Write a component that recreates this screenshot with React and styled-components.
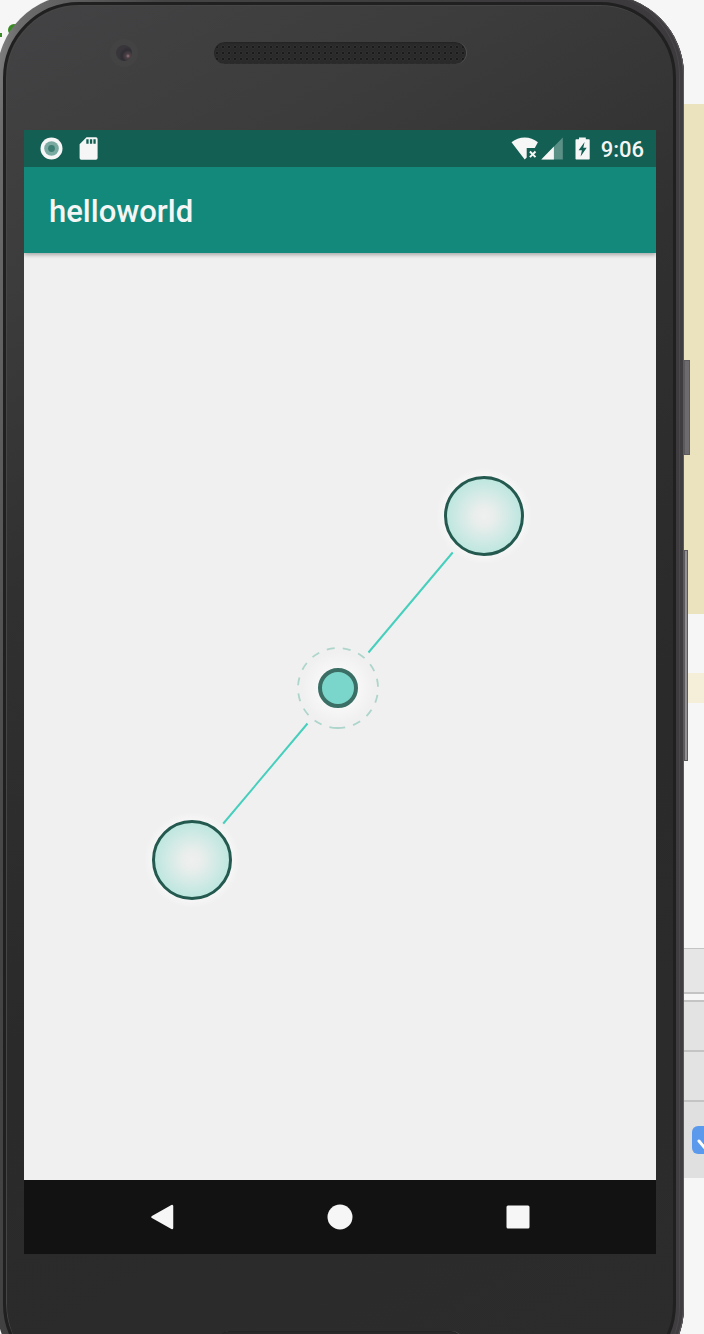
import React from "react";
import styled, { createGlobalStyle } from "styled-components";

const GlobalStyle = createGlobalStyle`
  *, *::before, *::after { box-sizing: border-box; }
  body { margin: 0; background: #f6f6f6; font-family: Roboto, "Liberation Sans", sans-serif; }
`;

const Page = styled.div`
  position: relative;
  display: flex;
  align-items: flex-start;
  min-height: 100vh;
  overflow: hidden;
  background: #f6f6f6;
`;

const BackdropMark = styled.svg`
  position: absolute;
  left: 0;
  top: 20px;
`;

const Phone = styled.main`
  position: relative;
  flex: 1;
  min-width: 0;
  margin: -5px 0 -53px -3px;
  padding: 7px 8px 7px 6px;
  border-radius: 80px;
  background: linear-gradient(100deg, #8b8b8b 0, #6c6c6c 3%, #444 18%, #3b393b 60%, #403e40 100%);
  box-shadow: inset -1px 0 0 #5c5a5c, inset -4px 0 0 #3f3d3f, inset -5px 0 0 #4a484a;
`;

const Body = styled.div`
  padding: 0 17px 0 18px;
  border: 3px solid #212021;
  border-radius: 76px;
  background: linear-gradient(150deg, #434345 0, #3c3c3c 16%, #303030 34%, #2a2a2a 60%, #2c2c2c 100%);
  box-shadow: inset 1px 1px 0 #464646;
`;

const SideButton = styled.span`
  position: absolute;
  left: 100%;
  top: ${(p) => p.$top}px;
  width: ${(p) => p.$width}px;
  height: ${(p) => p.$height}px;
  border: 1px solid #5c5a5c;
  background: ${(p) => p.$color};
`;

const TopBezel = styled.div`
  display: grid;
  grid-template-columns: 1fr auto 1fr;
  align-items: center;
  height: 125px;
  padding-bottom: 29px;
`;

const Camera = styled.span`
  display: flex;
  align-items: center;
  justify-content: center;
  justify-self: end;
  width: 28px;
  height: 28px;
  margin-right: 76px;
  border-radius: 50%;
  background: #444344;

  &::before {
    content: "";
    width: 16px;
    height: 16px;
    border-radius: 50%;
    background: radial-gradient(circle at 12px 11px, #a3777b 0, #4d4348 2px, #2f2d33 6px, #38363b 9px);
  }
`;

const Speaker = styled.span`
  width: ${(p) => p.$width}px;
  height: 22px;
  border-radius: 11px;
  background:
    radial-gradient(circle at 3px 3px, #171717 0, #1c1c1c 1px, #3c3c3c 2px, transparent 2px) 0 2px / 6px 6px,
    #2a2a2a;
  box-shadow: inset 0 1px 1px #242424, 1px 0 0 #505050;
`;

const BottomBezel = styled.div`
  display: flex;
  justify-content: center;
  align-items: flex-start;
  height: 123px;
  padding-top: 77px;
`;

const Screen = styled.section`
  display: flex;
  flex-direction: column;
  background: #f0f0f0;
`;

const StatusBar = styled.header`
  display: flex;
  align-items: center;
  justify-content: space-between;
  height: 37px;
  padding: 0 12px 0 16px;
  background: #135f53;
  color: #f5f5f5;
`;

const StatusGroup = styled.div`
  display: flex;
  align-items: center;
  gap: ${(p) => p.$gap}px;
  svg { display: block; }
`;

const Time = styled.time`
  padding-top: 2px;
  font-size: 22px;
  line-height: 26px;
  font-weight: 500;
`;

const AppBar = styled.div`
  position: relative;
  display: flex;
  align-items: center;
  height: 86px;
  padding: 4px 25px 0;
  background: #13897b;
  box-shadow: 0 2px 4px rgba(0, 0, 0, 0.3);
  clip-path: inset(0 0 -8px 0);
`;

const Title = styled.h1`
  margin: 0;
  color: #f5f5f5;
  font-size: 31px;
  line-height: 36px;
  font-weight: 500;
`;

const Canvas = styled.svg`
  display: block;
  width: 100%;
  height: auto;
`;

const NavBar = styled.nav`
  display: flex;
  justify-content: center;
  height: 74px;
  background: #121212;
`;

const NavButton = styled.button`
  display: flex;
  flex: 0 1 178px;
  align-items: center;
  justify-content: center;
  padding: 0;
  border: 0;
  background: none;
  color: #f6f6f6;
`;

const Desktop = styled.aside`
  flex: none;
  width: 20px;
`;

const Block = styled.div`
  height: ${(p) => p.$height}px;
  background: ${(p) => p.$color || "transparent"};
  border-top: ${(p) => p.$line || 0}px solid #c4c4c4;
`;

const OptionRow = styled(Block)`
  padding: 24px 0 0 8px;
  overflow: hidden;
`;

const CheckLabel = styled.label`
  display: grid;
  width: 28px;
  height: 28px;
  > * { grid-area: 1 / 1; }
`;

const CheckInput = styled.input`
  appearance: none;
  width: 28px;
  height: 28px;
  margin: 0;
  border-radius: 6px;
  background: #5b99ec;
`;

const RecordIcon = () => (
  <svg width="23" height="23" viewBox="0 0 23 23" aria-hidden="true">
    <circle cx="11.5" cy="11.5" r="11" fill="#f6f6f6" />
    <circle cx="11.5" cy="11.5" r="7.3" fill="#78aaa2" />
    <circle cx="11.5" cy="11.5" r="3.4" fill="#3d7e73" />
  </svg>
);

const SdCardIcon = () => (
  <svg width="19" height="23" viewBox="0 0 19 23" aria-hidden="true">
    <path d="M7.5 .3H17a1.6 1.6 0 0 1 1.6 1.6V21a1.7 1.7 0 0 1-1.7 1.7H2.3A1.7 1.7 0 0 1 .6 21V7.2Z" fill="#f6f6f6" />
    <path d="M7.3 2.3h2.3v4.5H7.3zM10.9 2.3h2.3v4.5h-2.3zM14.4 2.3h2.3v4.5h-2.3z" fill="#135f53" />
  </svg>
);

const WifiIcon = () => (
  <svg width="30" height="23" viewBox="0 0 30 23" aria-hidden="true">
    <path d="M.5 5.2Q6.3.4 13.7.4T26.9 5.2L23.8 11H15.7v9.4l-2 2.2Z" fill="#f6f6f6" />
    <path d="m18.9 14.5 5.6 5.6m0-5.6-5.6 5.6" stroke="#f6f6f6" strokeWidth="2" />
  </svg>
);

const SignalIcon = () => (
  <svg width="23" height="23" viewBox="0 0 23 23" aria-hidden="true">
    <path d="M.3 22.4 21.8.4v22Z" fill="#5b9087" />
    <path d="M.3 22.4 12.9 9.5v12.9Z" fill="#f6f6f6" />
  </svg>
);

const BatteryIcon = () => (
  <svg width="15" height="23" viewBox="0 0 15 23" aria-hidden="true">
    <path d="M4 .4h6.8v1.9H14a.7.7 0 0 1 .7.7v18.8a.7.7 0 0 1-.7.7H1.2a.7.7 0 0 1-.7-.7V3a.7.7 0 0 1 .7-.7H4Z" fill="#f6f6f6" />
    <path d="M9.6 5 3.6 13.300h3.300L5.600 19.600l6.100-8.800H8.300Z" fill="#135f53" />
  </svg>
);

const Handle = ({ x, y }) => (
  <g>
    <circle cx={x} cy={y} r="48" fill="url(#halo)" />
    <circle cx={x} cy={y} r="38.5" fill="url(#bubble)" stroke="#24594f" strokeWidth="3" />
  </g>
);

const NodeCanvas = () => (
  <Canvas viewBox="0 0 632 927" role="img" aria-label="Two connected handles">
    <defs>
      <radialGradient id="bubble">
        <stop offset="0" stopColor="#efefef" />
        <stop offset=".25" stopColor="#e9eeec" />
        <stop offset="1" stopColor="#bce6df" />
      </radialGradient>
      <radialGradient id="halo">
        <stop offset=".8" stopColor="#f7f7f7" />
        <stop offset="1" stopColor="#f0f0f0" />
      </radialGradient>
      <radialGradient id="dotHalo">
        <stop offset=".5" stopColor="#f8f8f8" />
        <stop offset="1" stopColor="#f0f0f0" />
      </radialGradient>
    </defs>
    <path d="M429.5 298.500 344.500 399.500M283.500 470.500 198.500 571.500" stroke="#47cfbd" strokeWidth="2" />
    <Handle x={460} y={263} />
    <Handle x={168} y={607} />
    <circle cx="314" cy="435" r="36" fill="url(#dotHalo)" />
    <circle
      cx="314" cy="435" r="40" fill="none" stroke="#add5cb" strokeWidth="1.800"
      strokeDasharray="8 8.200" transform="rotate(91 314 435)"
    />
    <circle cx="314" cy="435" r="18" fill="#7ad6ca" stroke="#3b6f65" strokeWidth="4" />
  </Canvas>
);

export default function App() {
  return (
    <>
      <GlobalStyle />
      <Page>
        <BackdropMark width="24" height="24" viewBox="0 0 24 24" aria-hidden="true">
          <rect x="0" y="13" width="2" height="4" fill="#3a8a25" />
          <circle cx="14" cy="10" r="6" fill="#3a8a25" />
        </BackdropMark>
        <Phone>
          <SideButton $top={365} $width={6} $height={95} $color="#6d6b6d" />
          <SideButton $top={555} $width={4} $height={211} $color="#929092" />
          <Body>
            <TopBezel>
              <Camera />
              <Speaker $width={252} />
            </TopBezel>
            <Screen>
              <StatusBar>
                <StatusGroup $gap={16}>
                  <RecordIcon />
                  <SdCardIcon />
                </StatusGroup>
                <StatusGroup $gap={11}>
                  <StatusGroup $gap={0}>
                    <WifiIcon />
                    <SignalIcon />
                  </StatusGroup>
                  <BatteryIcon />
                  <Time>9:06</Time>
                </StatusGroup>
              </StatusBar>
              <AppBar>
                <Title>helloworld</Title>
              </AppBar>
              <NodeCanvas />
              <NavBar>
                <NavButton aria-label="Back">
                  <svg width="24" height="26" viewBox="0 0 24 26">
                    <path d="M2.500 13 22 2v22Z" fill="currentColor" stroke="currentColor" strokeWidth="2.500" strokeLinejoin="round" />
                  </svg>
                </NavButton>
                <NavButton aria-label="Home">
                  <svg width="26" height="26" viewBox="0 0 26 26">
                    <circle cx="13" cy="13" r="12.500" fill="currentColor" />
                  </svg>
                </NavButton>
                <NavButton aria-label="Recent apps">
                  <svg width="24" height="24" viewBox="0 0 24 24">
                    <rect x=".5" y=".5" width="23" height="23" rx="1.500" fill="currentColor" />
                  </svg>
                </NavButton>
              </NavBar>
            </Screen>
            <BottomBezel>
              <Speaker $width={244} />
            </BottomBezel>
          </Body>
        </Phone>
        <Desktop>
          <Block $height={104} />
          <Block $height={510} $color="#ebe2be" />
          <Block $height={59} />
          <Block $height={30} $color="#f5efda" />
          <Block $height={245} />
          <Block $height={44} $line={1} $color="#e6e6e6" />
          <Block $height={8} $line={2} />
          <Block $height={50} $line={2} $color="#e3e3e3" />
          <Block $height={50} $line={2} $color="#e3e3e3" />
          <OptionRow $height={78} $line={2} $color="#e0e0e0">
            <CheckLabel>
              <CheckInput type="checkbox" defaultChecked aria-label="Option" />
              <svg width="28" height="28" viewBox="0 0 28 28" fill="none" aria-hidden="true">
                <path d="m7 15 5 6L21 8" stroke="#fff" strokeWidth="3" strokeLinecap="round" />
              </svg>
            </CheckLabel>
          </OptionRow>
        </Desktop>
      </Page>
    </>
  );
}
